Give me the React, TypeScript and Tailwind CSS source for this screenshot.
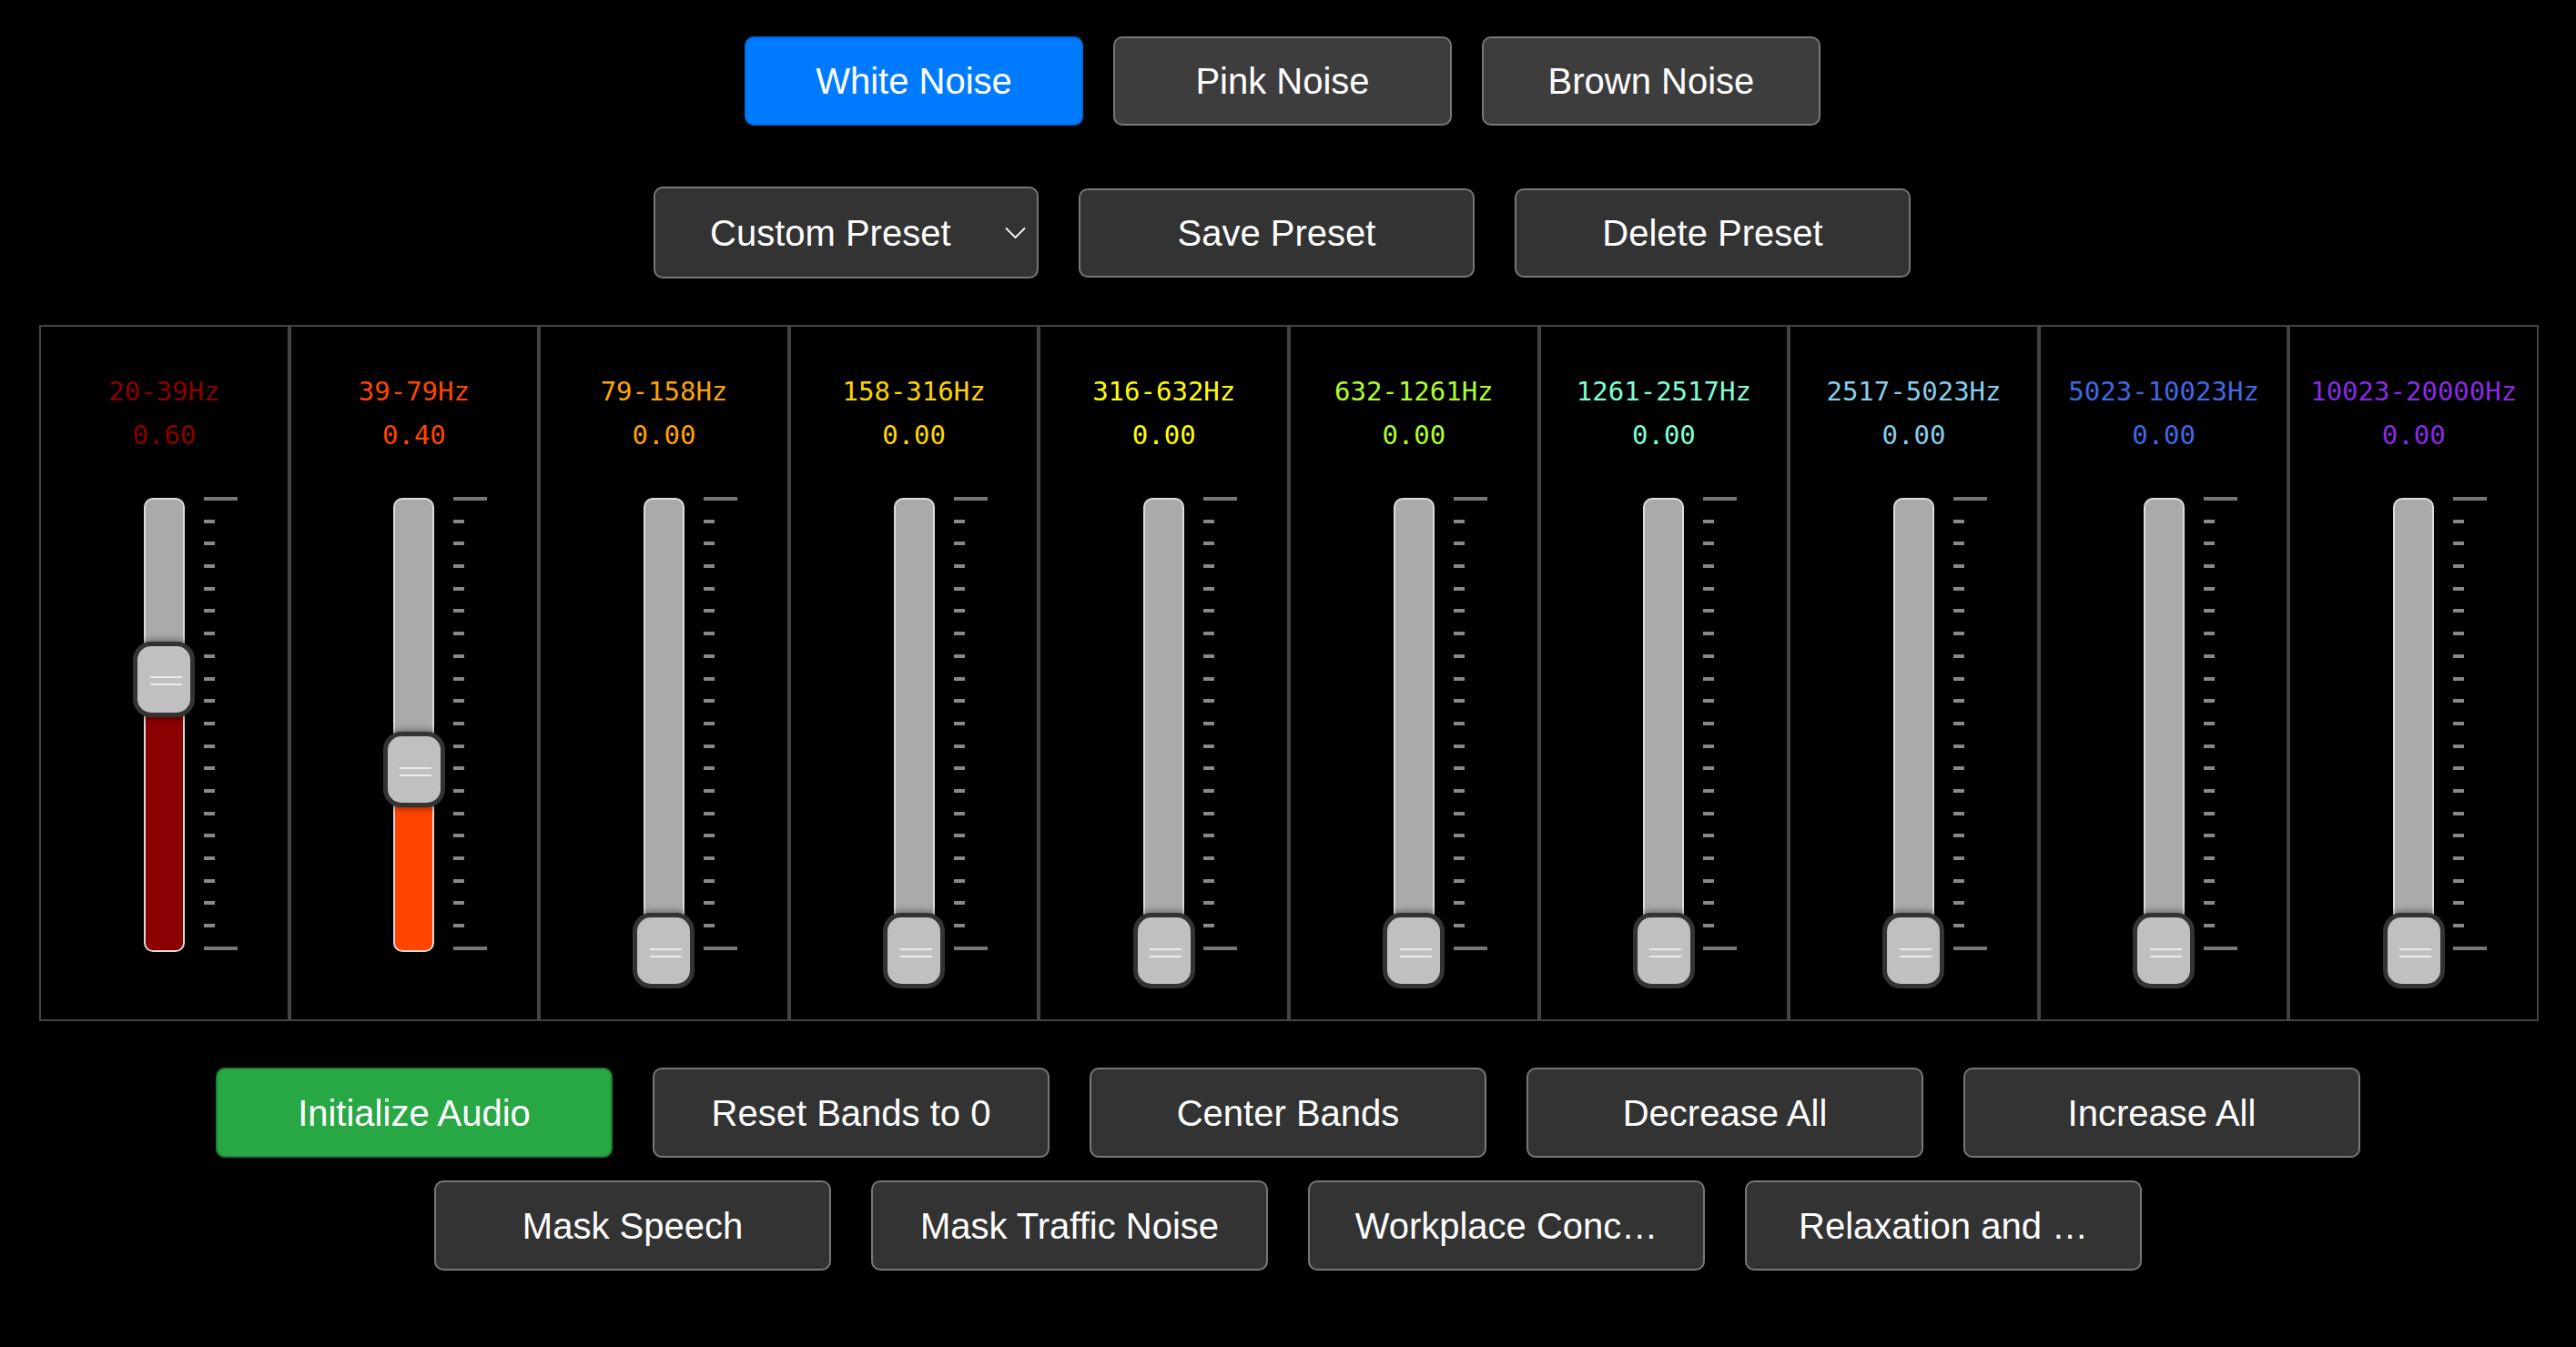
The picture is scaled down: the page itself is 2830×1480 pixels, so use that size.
import clsx from "clsx";
import type { ReactNode } from "react";

type Band = {
  label: string;
  value: number;
  text: string;
  fill: string;
};

const bands: Band[] = [
  { label: "20-39Hz", value: 0.6, text: "text-[#8b0000]", fill: "bg-[#8b0000]" },
  { label: "39-79Hz", value: 0.4, text: "text-[#ff4500]", fill: "bg-[#ff4500]" },
  { label: "79-158Hz", value: 0, text: "text-[#ffa500]", fill: "bg-[#ffa500]" },
  { label: "158-316Hz", value: 0, text: "text-[#ffd700]", fill: "bg-[#ffd700]" },
  { label: "316-632Hz", value: 0, text: "text-[#ffff00]", fill: "bg-[#ffff00]" },
  { label: "632-1261Hz", value: 0, text: "text-[#adff2f]", fill: "bg-[#adff2f]" },
  { label: "1261-2517Hz", value: 0, text: "text-[#7fffd4]", fill: "bg-[#7fffd4]" },
  { label: "2517-5023Hz", value: 0, text: "text-[#87ceeb]", fill: "bg-[#87ceeb]" },
  { label: "5023-10023Hz", value: 0, text: "text-[#4169e1]", fill: "bg-[#4169e1]" },
  { label: "10023-20000Hz", value: 0, text: "text-[#8a2be2]", fill: "bg-[#8a2be2]" },
];

// track geometry (px)
const TRAVEL = 497.5;
const THUMB_H = 83;

const Btn = ({
  children,
  className,
}: {
  children: ReactNode;
  className?: string;
}) => (
  <button
    className={clsx(
      "flex items-center justify-center rounded-[10px] border-2 text-[40px] leading-none text-white whitespace-nowrap",
      className ?? "border-[#777] bg-[#333]"
    )}
  >
    {children}
  </button>
);

const Fader = ({ band }: { band: Band }) => {
  const center = (1 - band.value) * TRAVEL;

  return (
    <div className="relative mt-[45px] h-[499px] w-[45px] rounded-[10px] border-2 border-[#dcdcdc] bg-[#aaa]">
      {/* filled part */}
      <div
        className={clsx("absolute bottom-0 left-0 right-0 rounded-b-[8px]", band.fill)}
        style={{ height: Math.max(0, 497 - center) }}
      />

      {/* scale ticks */}
      <div className="absolute left-[64px] top-[-3px] flex h-[498px] flex-col justify-between">
        {Array.from({ length: 21 }).map((_, i) => (
          <div
            key={i}
            className={clsx(
              "h-[4px]",
              i === 0 || i === 20 ? "w-[37px] bg-[#777]" : "w-[12px] bg-[#888]"
            )}
          />
        ))}
      </div>

      {/* thumb */}
      <div
        className="absolute left-1/2 flex h-[83px] w-[68px] -translate-x-1/2 flex-col items-center justify-center gap-[6px] rounded-[20px] border-[5px] border-[#333] bg-[#c0c0c0] pl-[4px] pt-[4px] shadow-[0_0_10px_rgba(0,0,0,0.6)]"
        style={{ top: center - THUMB_H / 2 - 2 }}
      >
        <div className="h-[2px] w-[35px] bg-[#ececec]" />
        <div className="h-[2px] w-[35px] bg-[#ececec]" />
      </div>
    </div>
  );
};

export default function App() {
  return (
    <div className="min-h-[1480px] w-full bg-black font-['Liberation_Sans',Arial,sans-serif]">
      {/* noise type */}
      <div className="flex justify-center gap-[33px] pr-[12px] pt-[40px]">
        <Btn className="h-[98px] w-[372px] border-[#0069d9] bg-[#007bff]">White Noise</Btn>
        <Btn className="h-[98px] w-[372px] border-[#777] bg-[#3e3d3e]">Pink Noise</Btn>
        <Btn className="h-[98px] w-[372px] border-[#777] bg-[#3e3d3e]">Brown Noise</Btn>
      </div>

      {/* presets */}
      <div className="mt-[67px] flex items-center justify-center gap-[44px] pr-[13px]">
        <div className="relative flex h-[101px] w-[423px] items-center rounded-[10px] border-2 border-[#777] bg-[#333] pl-[60px] text-[40px] leading-none text-white">
          Custom Preset
          <svg
            className="absolute right-[12px] top-1/2 -translate-y-1/2"
            width="23"
            height="13"
            viewBox="0 0 23 13"
            fill="none"
          >
            <polyline points="1,1 11.5,11.5 22,1" stroke="#fff" strokeWidth="1.8" />
          </svg>
        </div>
        <Btn className="h-[98px] w-[435px] border-[#777] bg-[#333]">Save Preset</Btn>
        <Btn className="h-[98px] w-[435px] border-[#777] bg-[#333]">Delete Preset</Btn>
      </div>

      {/* equalizer bands */}
      <div className="ml-[43px] mt-[51px] grid w-[2746px] grid-cols-10">
        {bands.map((band) => (
          <div
            key={band.label}
            className="flex flex-col items-center border-2 border-[#444] pb-[74px] pt-[47px]"
          >
            <div
              className={clsx(
                "font-['DejaVu_Sans_Mono',monospace] text-[29px] leading-[48px]",
                band.text
              )}
            >
              {band.label}
            </div>
            <div
              className={clsx(
                "font-['DejaVu_Sans_Mono',monospace] text-[29px] leading-[48px]",
                band.text
              )}
            >
              {band.value.toFixed(2)}
            </div>
            <Fader band={band} />
          </div>
        ))}
      </div>

      {/* actions */}
      <div className="mt-[51px] flex flex-wrap justify-center gap-x-[44px] gap-y-[25px] px-[100px] pb-[60px]">
        <Btn className="h-[99px] w-[436px] border-[#1e7e34] bg-[#28a745]">Initialize Audio</Btn>
        <Btn className="h-[99px] w-[436px] border-[#777] bg-[#333]">Reset Bands to 0</Btn>
        <Btn className="h-[99px] w-[436px] border-[#777] bg-[#333]">Center Bands</Btn>
        <Btn className="h-[99px] w-[436px] border-[#777] bg-[#333]">Decrease All</Btn>
        <Btn className="h-[99px] w-[436px] border-[#777] bg-[#333]">Increase All</Btn>
        <Btn className="h-[99px] w-[436px] border-[#777] bg-[#333]">Mask Speech</Btn>
        <Btn className="h-[99px] w-[436px] border-[#777] bg-[#333]">Mask Traffic Noise</Btn>
        <Btn className="h-[99px] w-[436px] border-[#777] bg-[#333]">Workplace Conc…</Btn>
        <Btn className="h-[99px] w-[436px] border-[#777] bg-[#333]">Relaxation and …</Btn>
      </div>
    </div>
  );
}
